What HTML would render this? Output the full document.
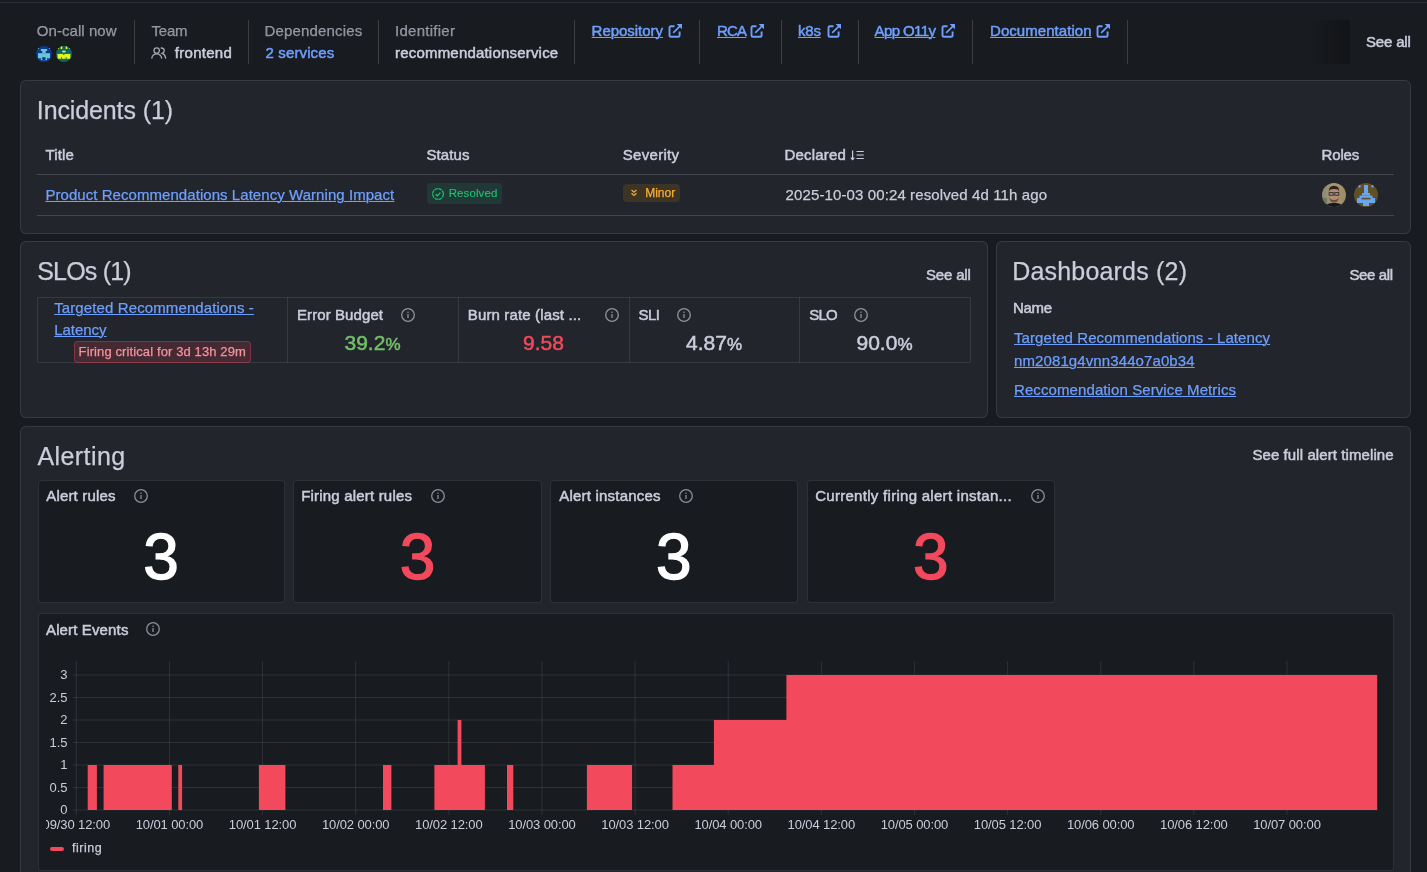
<!DOCTYPE html>
<html><head><meta charset="utf-8"><style>
html,body{margin:0;padding:0;}
body{width:1427px;height:872px;overflow:hidden;position:relative;background:#181b1f;font-family:"Liberation Sans", sans-serif;}
.t{position:absolute;white-space:nowrap;}
.r{position:absolute;}
</style></head><body><div id="root" style="position:absolute;left:0;top:0;width:1427px;height:872px;will-change:transform">
<div class="r" style="left:0;top:2px;width:1427px;height:1px;background:#2a2d33"></div>
<div class="t" id="t0" style="left:36.80px;top:23.30px;font-size:15px;line-height:15px;color:rgba(204,204,220,0.65);letter-spacing:0.060px;-webkit-text-stroke:0.25px currentColor;">On-call now</div>
<svg class="r" style="left:36px;top:46px" width="16" height="16" viewBox="0 0 16 16"><defs><clipPath id="c1"><circle cx="8" cy="8" r="8"/></clipPath></defs><g clip-path="url(#c1)"><rect width="16" height="16" fill="#0b3a8c"/><g fill="#6cc4d8"><rect x="4.8" y="3" width="6.3" height="2"/><rect x="6.3" y="5" width="3.4" height="2.3"/><rect x="2" y="7.2" width="12" height="5.1"/><rect x="4.8" y="12.3" width="6.3" height="1.9"/><rect x="2" y="2" width="1" height="1"/><rect x="13" y="2" width="1" height="1"/></g><rect x="6.3" y="11.2" width="3.1" height="3" fill="#0b3a8c"/></g></svg>
<svg class="r" style="left:56px;top:46px" width="16" height="16" viewBox="0 0 16 16"><defs><clipPath id="c2"><circle cx="8" cy="8" r="8"/></clipPath></defs><g clip-path="url(#c2)"><rect width="16" height="16" fill="#0e6466"/><g fill="#e4f51c"><rect x="4.6" y="0" width="1.7" height="3"/><rect x="9.7" y="0" width="1.7" height="3"/><rect x="1.9" y="1.8" width="1" height="1"/><rect x="13.1" y="1.8" width="1" height="1"/><ellipse cx="7.9" cy="5.5" rx="1.9" ry="0.9"/><rect x="1.5" y="7.9" width="12.9" height="4.9"/></g><g fill="#0e6466"><path d="M6.5 7.9H9L7.75 8.9Z"/><rect x="5" y="11.2" width="1" height="1.6"/><rect x="9.6" y="11.2" width="1" height="1.6"/></g></g></svg>
<div class="r" style="left:134px;top:20px;width:1px;height:44px;background:rgba(204,204,220,0.20)"></div>
<div class="r" style="left:248px;top:20px;width:1px;height:44px;background:rgba(204,204,220,0.20)"></div>
<div class="r" style="left:378px;top:20px;width:1px;height:44px;background:rgba(204,204,220,0.20)"></div>
<div class="r" style="left:574px;top:20px;width:1px;height:44px;background:rgba(204,204,220,0.20)"></div>
<div class="r" style="left:699px;top:20px;width:1px;height:44px;background:rgba(204,204,220,0.20)"></div>
<div class="r" style="left:781px;top:20px;width:1px;height:44px;background:rgba(204,204,220,0.20)"></div>
<div class="r" style="left:858px;top:20px;width:1px;height:44px;background:rgba(204,204,220,0.20)"></div>
<div class="r" style="left:972px;top:20px;width:1px;height:44px;background:rgba(204,204,220,0.20)"></div>
<div class="r" style="left:1127px;top:20px;width:1px;height:44px;background:rgba(204,204,220,0.20)"></div>
<div class="t" id="t1" style="left:151.40px;top:23.30px;font-size:15px;line-height:15px;color:rgba(204,204,220,0.65);letter-spacing:-0.163px;-webkit-text-stroke:0.25px currentColor;">Team</div>
<svg class="r" style="left:150px;top:46px" width="18" height="14" viewBox="0 0 18 14"><g fill="none" stroke="#a5a7b2" stroke-width="1.3" stroke-linecap="round"><circle cx="6.7" cy="4.6" r="2.7"/><path d="M1.8 12.2Q2.6 7.9 6.7 7.9Q10.8 7.9 11.6 12.2"/><path d="M11.2 2.0Q14.3 2.2 14.3 4.6Q14.3 6.6 12.2 7.4Q15.1 8.3 15.7 12.2"/></g></svg>
<div class="t" id="t2" style="left:174.80px;top:45.30px;font-size:15px;line-height:15px;color:#ccccdc;letter-spacing:0.278px;-webkit-text-stroke:0.5px currentColor;">frontend</div>
<div class="t" id="t3" style="left:264.60px;top:23.30px;font-size:15px;line-height:15px;color:rgba(204,204,220,0.65);letter-spacing:0.154px;-webkit-text-stroke:0.25px currentColor;">Dependencies</div>
<div class="t" id="t4" style="left:265.60px;top:45.30px;font-size:15px;line-height:15px;color:#6e9fff;letter-spacing:0.120px;-webkit-text-stroke:0.5px currentColor;">2 services</div>
<div class="t" id="t5" style="left:395.00px;top:23.30px;font-size:15px;line-height:15px;color:rgba(204,204,220,0.65);letter-spacing:0.272px;-webkit-text-stroke:0.25px currentColor;">Identifier</div>
<div class="t" id="t6" style="left:395.00px;top:45.30px;font-size:15px;line-height:15px;color:#ccccdc;letter-spacing:0.197px;-webkit-text-stroke:0.5px currentColor;">recommendationservice</div>
<div class="t" id="t7" style="left:591.60px;top:22.90px;font-size:15px;line-height:15px;color:#6e9fff;letter-spacing:-0.033px;-webkit-text-stroke:0.5px currentColor;text-decoration:underline;text-decoration-thickness:1px;">Repository</div>
<svg class="r" style="left:667.50px;top:22.60px" width="15" height="15" viewBox="0 0 15 15"><path d="M6.5 3.2H2.9Q1.5 3.2 1.5 4.6V12.4Q1.5 13.8 2.9 13.8H10.2Q11.6 13.8 11.6 12.4V8.6" fill="none" stroke="#6e9fff" stroke-width="1.9"/><path d="M5.2 9.9L12 3.1" stroke="#6e9fff" stroke-width="1.6"/><path d="M8.6 0.9H14V6.3Z" fill="#6e9fff"/></svg>
<div class="t" id="t8" style="left:717.00px;top:22.90px;font-size:15px;line-height:15px;color:#6e9fff;letter-spacing:-0.800px;-webkit-text-stroke:0.5px currentColor;text-decoration:underline;text-decoration-thickness:1px;">RCA</div>
<svg class="r" style="left:749.70px;top:22.60px" width="15" height="15" viewBox="0 0 15 15"><path d="M6.5 3.2H2.9Q1.5 3.2 1.5 4.6V12.4Q1.5 13.8 2.9 13.8H10.2Q11.6 13.8 11.6 12.4V8.6" fill="none" stroke="#6e9fff" stroke-width="1.9"/><path d="M5.2 9.9L12 3.1" stroke="#6e9fff" stroke-width="1.6"/><path d="M8.6 0.9H14V6.3Z" fill="#6e9fff"/></svg>
<div class="t" id="t9" style="left:798.00px;top:22.90px;font-size:15px;line-height:15px;color:#6e9fff;letter-spacing:-0.200px;-webkit-text-stroke:0.5px currentColor;text-decoration:underline;text-decoration-thickness:1px;">k8s</div>
<svg class="r" style="left:826.70px;top:22.60px" width="15" height="15" viewBox="0 0 15 15"><path d="M6.5 3.2H2.9Q1.5 3.2 1.5 4.6V12.4Q1.5 13.8 2.9 13.8H10.2Q11.6 13.8 11.6 12.4V8.6" fill="none" stroke="#6e9fff" stroke-width="1.9"/><path d="M5.2 9.9L12 3.1" stroke="#6e9fff" stroke-width="1.6"/><path d="M8.6 0.9H14V6.3Z" fill="#6e9fff"/></svg>
<div class="t" id="t10" style="left:874.60px;top:22.90px;font-size:15px;line-height:15px;color:#6e9fff;letter-spacing:-0.600px;-webkit-text-stroke:0.5px currentColor;text-decoration:underline;text-decoration-thickness:1px;">App O11y</div>
<svg class="r" style="left:940.70px;top:22.60px" width="15" height="15" viewBox="0 0 15 15"><path d="M6.5 3.2H2.9Q1.5 3.2 1.5 4.6V12.4Q1.5 13.8 2.9 13.8H10.2Q11.6 13.8 11.6 12.4V8.6" fill="none" stroke="#6e9fff" stroke-width="1.9"/><path d="M5.2 9.9L12 3.1" stroke="#6e9fff" stroke-width="1.6"/><path d="M8.6 0.9H14V6.3Z" fill="#6e9fff"/></svg>
<div class="t" id="t11" style="left:990.00px;top:22.90px;font-size:15px;line-height:15px;color:#6e9fff;letter-spacing:0.057px;-webkit-text-stroke:0.5px currentColor;text-decoration:underline;text-decoration-thickness:1px;">Documentation</div>
<svg class="r" style="left:1095.50px;top:22.60px" width="15" height="15" viewBox="0 0 15 15"><path d="M6.5 3.2H2.9Q1.5 3.2 1.5 4.6V12.4Q1.5 13.8 2.9 13.8H10.2Q11.6 13.8 11.6 12.4V8.6" fill="none" stroke="#6e9fff" stroke-width="1.9"/><path d="M5.2 9.9L12 3.1" stroke="#6e9fff" stroke-width="1.6"/><path d="M8.6 0.9H14V6.3Z" fill="#6e9fff"/></svg>
<div class="r" style="left:1311px;top:20px;width:39px;height:44px;background:linear-gradient(90deg,rgba(17,18,23,0),#131418)"></div>
<div class="t" id="t12" style="left:1366.00px;top:34.20px;font-size:15px;line-height:15px;color:#ccccdc;letter-spacing:-0.179px;-webkit-text-stroke:0.5px currentColor;">See all</div>
<div class="r" style="left:20px;top:80px;width:1391px;height:154px;background:#22252b;border:1px solid rgba(204,204,220,0.12);border-radius:6px;box-sizing:border-box"></div>
<div class="t" id="t13" style="left:36.80px;top:97.93px;font-size:25px;line-height:25px;color:#ccccdc;letter-spacing:-0.113px;-webkit-text-stroke:0.25px currentColor;">Incidents (1)</div>
<div class="t" id="t14" style="left:45.40px;top:147.30px;font-size:15px;line-height:15px;color:#ccccdc;letter-spacing:0.155px;-webkit-text-stroke:0.5px currentColor;">Title</div>
<div class="t" id="t15" style="left:426.40px;top:147.30px;font-size:15px;line-height:15px;color:#ccccdc;letter-spacing:0.094px;-webkit-text-stroke:0.5px currentColor;">Status</div>
<div class="t" id="t16" style="left:622.80px;top:147.30px;font-size:15px;line-height:15px;color:#ccccdc;letter-spacing:0.288px;-webkit-text-stroke:0.5px currentColor;">Severity</div>
<div class="t" id="t17" style="left:784.60px;top:147.30px;font-size:15px;line-height:15px;color:#ccccdc;letter-spacing:0.167px;-webkit-text-stroke:0.5px currentColor;">Declared</div>
<div class="t" id="t18" style="left:1321.60px;top:147.30px;font-size:15px;line-height:15px;color:#ccccdc;letter-spacing:-0.190px;-webkit-text-stroke:0.5px currentColor;">Roles</div>
<svg class="r" style="left:850px;top:149px" width="15" height="13" viewBox="0 0 15 13"><g fill="none" stroke="#ccccdc" stroke-width="1.2"><path d="M2.6 1.5V10.5"/><path d="M0.8 8.6L2.6 10.6L4.4 8.6"/><path d="M6.5 2.5H13.8M6.5 6H13.8M6.5 9.5H13.8"/></g></svg>
<div class="r" style="left:37px;top:174px;width:1357px;height:1px;background:rgba(204,204,220,0.20)"></div>
<div class="r" style="left:37px;top:215px;width:1357px;height:1px;background:rgba(204,204,220,0.20)"></div>
<div class="t" id="t19" style="left:45.40px;top:186.90px;font-size:15px;line-height:15px;color:#6e9fff;letter-spacing:0.057px;-webkit-text-stroke:0.25px currentColor;text-decoration:underline;text-decoration-thickness:1px;">Product Recommendations Latency Warning Impact</div>
<div class="r" style="left:427px;top:183px;width:75px;height:21px;background:rgba(27,133,94,0.22);border-radius:3px"></div>
<svg class="r" style="left:431px;top:187px" width="14" height="14" viewBox="0 0 14 14"><circle cx="7" cy="7" r="5.4" fill="none" stroke="#1ec472" stroke-width="1.2" stroke-dasharray="3.6 0.6"/><path d="M4.6 7.2L6.3 8.8L9.4 5.6" fill="none" stroke="#1ec472" stroke-width="1.2"/></svg>
<div class="t" id="t20" style="left:448.70px;top:188.06px;font-size:11.5px;line-height:11.5px;color:#1ec472;letter-spacing:0.100px;-webkit-text-stroke:0.1px currentColor;">Resolved</div>
<div class="r" style="left:623px;top:184px;width:57px;height:18px;background:rgba(255,166,0,0.12);border-radius:4px"></div>
<svg class="r" style="left:630px;top:189px" width="8" height="8" viewBox="0 0 8 8"><g fill="none" stroke="#fbad37" stroke-width="1.3"><path d="M1.5 1L4 3.2L6.5 1"/><path d="M1.5 4.2L4 6.4L6.5 4.2"/></g></svg>
<div class="t" id="t21" style="left:645.20px;top:187.04px;font-size:12px;line-height:12px;color:#fbad37;-webkit-text-stroke:0.25px currentColor;">Minor</div>
<div class="t" id="t22" style="left:785.60px;top:186.90px;font-size:15px;line-height:15px;color:#ccccdc;letter-spacing:0.113px;-webkit-text-stroke:0.25px currentColor;">2025-10-03 00:24 resolved 4d 11h ago</div>
<svg class="r" style="left:1322px;top:183px" width="24" height="24" viewBox="0 0 24 24"><defs><clipPath id="c3"><circle cx="12" cy="12" r="12"/></clipPath><linearGradient id="g3" x1="0" y1="0" x2="1" y2="0"><stop offset="0" stop-color="#8a8a70"/><stop offset="0.5" stop-color="#a89a78"/><stop offset="1" stop-color="#9c8a60"/></linearGradient></defs><g clip-path="url(#c3)"><rect width="24" height="24" fill="url(#g3)"/><ellipse cx="12" cy="12.5" rx="5.2" ry="7" fill="#b48a74"/><path d="M6.8 9Q6.5 2.8 12 2.8Q17.5 2.8 17.2 9L16.2 6.8Q12 5 7.8 6.8Z" fill="#2e241e"/><g fill="none" stroke="#2a2a2a" stroke-width="0.9"><rect x="7.2" y="9.6" width="4" height="2.6"/><rect x="12.8" y="9.6" width="4" height="2.6"/></g><path d="M7 14Q7.5 19.5 12 19.8Q16.5 19.5 17 14Q16 17 12 17Q8 17 7 14Z" fill="#5a4236" opacity="0.8"/><path d="M3 24Q5 19.5 12 20Q19 19.5 21 24Z" fill="#141820"/><rect x="0" y="15" width="5" height="6" fill="#55674a" opacity="0.55"/></g></svg>
<svg class="r" style="left:1354px;top:183px" width="24" height="24" viewBox="0 0 24 24"><defs><clipPath id="c4"><circle cx="12" cy="12" r="12"/></clipPath></defs><g clip-path="url(#c4)"><rect width="24" height="24" fill="#5f5028"/><g fill="#6aa5f0"><rect x="10" y="2" width="4" height="8"/><rect x="4.5" y="2" width="2" height="2.5"/><rect x="17.5" y="2" width="2" height="2.5"/><rect x="8" y="10" width="8" height="2.5"/><rect x="5.5" y="12.5" width="13" height="2.5"/><rect x="3" y="15" width="18" height="5"/><rect x="9" y="20" width="6" height="3"/></g><rect x="7.5" y="14.8" width="9" height="1.6" fill="#5f5028"/></g></svg>
<div class="r" style="left:20px;top:241px;width:968px;height:177px;background:#22252b;border:1px solid rgba(204,204,220,0.12);border-radius:6px;box-sizing:border-box"></div>
<div class="t" id="t23" style="left:37.20px;top:258.83px;font-size:25px;line-height:25px;color:#ccccdc;letter-spacing:-0.800px;-webkit-text-stroke:0.25px currentColor;">SLOs (1)</div>
<div class="t" id="t24" style="left:926.00px;top:267.20px;font-size:15px;line-height:15px;color:#ccccdc;letter-spacing:-0.179px;-webkit-text-stroke:0.5px currentColor;">See all</div>
<div class="r" style="left:37px;top:297px;width:934px;height:66px;border:1px solid rgba(204,204,220,0.12);box-sizing:border-box"></div>
<div class="r" style="left:287px;top:297px;width:1px;height:66px;background:rgba(204,204,220,0.12)"></div>
<div class="r" style="left:458px;top:297px;width:1px;height:66px;background:rgba(204,204,220,0.12)"></div>
<div class="r" style="left:629px;top:297px;width:1px;height:66px;background:rgba(204,204,220,0.12)"></div>
<div class="r" style="left:799px;top:297px;width:1px;height:66px;background:rgba(204,204,220,0.12)"></div>
<div class="t" id="t25" style="left:54.20px;top:300.00px;font-size:15px;line-height:15px;color:#6e9fff;letter-spacing:0.113px;-webkit-text-stroke:0.25px currentColor;text-decoration:underline;text-decoration-thickness:1px;">Targeted Recommendations -</div>
<div class="t" id="lat" style="left:54.20px;top:322.10px;font-size:15px;line-height:15px;color:#6e9fff;letter-spacing:-0.025px;-webkit-text-stroke:0.25px currentColor;text-decoration:underline;text-decoration-thickness:1px;">Latency</div>
<div class="r" style="left:74px;top:341px;width:177px;height:22px;background:rgba(242,73,92,0.17);border:1px solid rgba(242,73,92,0.35);border-radius:4px;box-sizing:border-box"></div>
<div class="t" id="t27" style="left:78.60px;top:345.19px;font-size:13px;line-height:13px;color:#f5939c;letter-spacing:0.111px;-webkit-text-stroke:0.25px currentColor;">Firing critical for 3d 13h 29m</div>
<div class="t" id="t28" style="left:297.00px;top:307.20px;font-size:15px;line-height:15px;color:#ccccdc;letter-spacing:0.087px;-webkit-text-stroke:0.5px currentColor;">Error Budget</div>
<svg class="r" style="left:399.85px;top:307.00px" width="16" height="16" viewBox="0 0 16 16"><circle cx="8" cy="8" r="6.3" fill="none" stroke="rgba(204,204,220,0.65)" stroke-width="1.3"/><rect x="7.35" y="7" width="1.3" height="4" fill="rgba(204,204,220,0.65)"/><rect x="7.35" y="4.6" width="1.3" height="1.3" fill="rgba(204,204,220,0.65)"/></svg>
<div class="t" id="t29" style="left:467.80px;top:307.20px;font-size:15px;line-height:15px;color:#ccccdc;letter-spacing:0.139px;-webkit-text-stroke:0.5px currentColor;">Burn rate (last ...</div>
<svg class="r" style="left:603.95px;top:307.00px" width="16" height="16" viewBox="0 0 16 16"><circle cx="8" cy="8" r="6.3" fill="none" stroke="rgba(204,204,220,0.65)" stroke-width="1.3"/><rect x="7.35" y="7" width="1.3" height="4" fill="rgba(204,204,220,0.65)"/><rect x="7.35" y="4.6" width="1.3" height="1.3" fill="rgba(204,204,220,0.65)"/></svg>
<div class="t" id="t30" style="left:638.40px;top:307.20px;font-size:15px;line-height:15px;color:#ccccdc;letter-spacing:-0.458px;-webkit-text-stroke:0.5px currentColor;">SLI</div>
<svg class="r" style="left:676.05px;top:307.00px" width="16" height="16" viewBox="0 0 16 16"><circle cx="8" cy="8" r="6.3" fill="none" stroke="rgba(204,204,220,0.65)" stroke-width="1.3"/><rect x="7.35" y="7" width="1.3" height="4" fill="rgba(204,204,220,0.65)"/><rect x="7.35" y="4.6" width="1.3" height="1.3" fill="rgba(204,204,220,0.65)"/></svg>
<div class="t" id="t31" style="left:809.20px;top:307.20px;font-size:15px;line-height:15px;color:#ccccdc;letter-spacing:-0.800px;-webkit-text-stroke:0.5px currentColor;">SLO</div>
<svg class="r" style="left:853.15px;top:307.00px" width="16" height="16" viewBox="0 0 16 16"><circle cx="8" cy="8" r="6.3" fill="none" stroke="rgba(204,204,220,0.65)" stroke-width="1.3"/><rect x="7.35" y="7" width="1.3" height="4" fill="rgba(204,204,220,0.65)"/><rect x="7.35" y="4.6" width="1.3" height="1.3" fill="rgba(204,204,220,0.65)"/></svg>
<div class="t" style="left:272.50px;width:200px;text-align:center;top:332.22px;font-size:21px;line-height:21px;color:#73bf69;-webkit-text-stroke:0.5px currentColor">39.2<span style="font-size:17px">%</span></div>
<div class="t" style="left:443.50px;width:200px;text-align:center;top:332.22px;font-size:21px;line-height:21px;color:#f2495c;-webkit-text-stroke:0.5px currentColor">9.58</div>
<div class="t" style="left:614.00px;width:200px;text-align:center;top:332.22px;font-size:21px;line-height:21px;color:#ccccdc;-webkit-text-stroke:0.5px currentColor">4.87<span style="font-size:17px">%</span></div>
<div class="t" style="left:784.50px;width:200px;text-align:center;top:332.22px;font-size:21px;line-height:21px;color:#ccccdc;-webkit-text-stroke:0.5px currentColor">90.0<span style="font-size:17px">%</span></div>
<div class="r" style="left:996px;top:241px;width:415px;height:177px;background:#22252b;border:1px solid rgba(204,204,220,0.12);border-radius:6px;box-sizing:border-box"></div>
<div class="t" id="t32" style="left:1012.20px;top:258.83px;font-size:25px;line-height:25px;color:#ccccdc;letter-spacing:0.191px;-webkit-text-stroke:0.25px currentColor;">Dashboards (2)</div>
<div class="t" id="t33" style="left:1349.40px;top:267.30px;font-size:15px;line-height:15px;color:#ccccdc;letter-spacing:-0.345px;-webkit-text-stroke:0.5px currentColor;">See all</div>
<div class="t" id="t34" style="left:1013.00px;top:300.30px;font-size:15px;line-height:15px;color:#ccccdc;letter-spacing:-0.339px;-webkit-text-stroke:0.5px currentColor;">Name</div>
<div class="t" id="t35" style="left:1014.00px;top:330.20px;font-size:15px;line-height:15px;color:#6e9fff;letter-spacing:0.077px;-webkit-text-stroke:0.25px currentColor;text-decoration:underline;text-decoration-thickness:1px;">Targeted Recommendations - Latency</div>
<div class="t" id="t36" style="left:1014.00px;top:352.50px;font-size:15px;line-height:15px;color:#6e9fff;letter-spacing:0.105px;-webkit-text-stroke:0.25px currentColor;text-decoration:underline;text-decoration-thickness:1px;">nm2081g4vnn344o7a0b34</div>
<div class="t" id="t37" style="left:1014.00px;top:382.30px;font-size:15px;line-height:15px;color:#6e9fff;letter-spacing:0.094px;-webkit-text-stroke:0.25px currentColor;text-decoration:underline;text-decoration-thickness:1px;">Reccomendation Service Metrics</div>
<div class="r" style="left:20px;top:426px;width:1391px;height:520px;background:#22252b;border:1px solid rgba(204,204,220,0.12);border-radius:6px;box-sizing:border-box"></div>
<div class="t" id="t38" style="left:37.40px;top:443.53px;font-size:25px;line-height:25px;color:#ccccdc;letter-spacing:0.431px;-webkit-text-stroke:0.25px currentColor;">Alerting</div>
<div class="t" id="t39" style="left:1252.40px;top:446.50px;font-size:15px;line-height:15px;color:#ccccdc;letter-spacing:0.091px;-webkit-text-stroke:0.5px currentColor;">See full alert timeline</div>
<div class="r" style="left:37.5px;top:479.5px;width:247px;height:123.5px;background:#181b1f;border:1px solid rgba(204,204,220,0.12);border-radius:4px;box-sizing:border-box"></div>
<div class="t" id="t40" style="left:46.20px;top:488.30px;font-size:15px;line-height:15px;color:#ccccdc;letter-spacing:0.187px;-webkit-text-stroke:0.5px currentColor;">Alert rules</div>
<svg class="r" style="left:133.05px;top:488.00px" width="16" height="16" viewBox="0 0 16 16"><circle cx="8" cy="8" r="6.3" fill="none" stroke="rgba(204,204,220,0.65)" stroke-width="1.3"/><rect x="7.35" y="7" width="1.3" height="4" fill="rgba(204,204,220,0.65)"/><rect x="7.35" y="4.6" width="1.3" height="1.3" fill="rgba(204,204,220,0.65)"/></svg>
<div class="t" style="left:37.50px;width:247px;text-align:center;top:525.01px;font-size:64px;line-height:64px;color:#ffffff;-webkit-text-stroke:1.3px currentColor">3</div>
<div class="r" style="left:293px;top:479.5px;width:249px;height:123.5px;background:#181b1f;border:1px solid rgba(204,204,220,0.12);border-radius:4px;box-sizing:border-box"></div>
<div class="t" id="t41" style="left:301.20px;top:488.30px;font-size:15px;line-height:15px;color:#ccccdc;letter-spacing:0.190px;-webkit-text-stroke:0.5px currentColor;">Firing alert rules</div>
<svg class="r" style="left:430.10px;top:488.00px" width="16" height="16" viewBox="0 0 16 16"><circle cx="8" cy="8" r="6.3" fill="none" stroke="rgba(204,204,220,0.65)" stroke-width="1.3"/><rect x="7.35" y="7" width="1.3" height="4" fill="rgba(204,204,220,0.65)"/><rect x="7.35" y="4.6" width="1.3" height="1.3" fill="rgba(204,204,220,0.65)"/></svg>
<div class="t" style="left:293.00px;width:249px;text-align:center;top:525.01px;font-size:64px;line-height:64px;color:#f2495c;-webkit-text-stroke:1.3px currentColor">3</div>
<div class="r" style="left:550px;top:479.5px;width:247.5px;height:123.5px;background:#181b1f;border:1px solid rgba(204,204,220,0.12);border-radius:4px;box-sizing:border-box"></div>
<div class="t" id="t42" style="left:559.20px;top:488.30px;font-size:15px;line-height:15px;color:#ccccdc;letter-spacing:0.214px;-webkit-text-stroke:0.5px currentColor;">Alert instances</div>
<svg class="r" style="left:678.15px;top:488.00px" width="16" height="16" viewBox="0 0 16 16"><circle cx="8" cy="8" r="6.3" fill="none" stroke="rgba(204,204,220,0.65)" stroke-width="1.3"/><rect x="7.35" y="7" width="1.3" height="4" fill="rgba(204,204,220,0.65)"/><rect x="7.35" y="4.6" width="1.3" height="1.3" fill="rgba(204,204,220,0.65)"/></svg>
<div class="t" style="left:550.00px;width:247.5px;text-align:center;top:525.01px;font-size:64px;line-height:64px;color:#ffffff;-webkit-text-stroke:1.3px currentColor">3</div>
<div class="r" style="left:806.5px;top:479.5px;width:248.5px;height:123.5px;background:#181b1f;border:1px solid rgba(204,204,220,0.12);border-radius:4px;box-sizing:border-box"></div>
<div class="t" id="t43" style="left:815.20px;top:488.30px;font-size:15px;line-height:15px;color:#ccccdc;letter-spacing:0.286px;-webkit-text-stroke:0.5px currentColor;">Currently firing alert instan...</div>
<svg class="r" style="left:1030.05px;top:488.00px" width="16" height="16" viewBox="0 0 16 16"><circle cx="8" cy="8" r="6.3" fill="none" stroke="rgba(204,204,220,0.65)" stroke-width="1.3"/><rect x="7.35" y="7" width="1.3" height="4" fill="rgba(204,204,220,0.65)"/><rect x="7.35" y="4.6" width="1.3" height="1.3" fill="rgba(204,204,220,0.65)"/></svg>
<div class="t" style="left:806.50px;width:248.5px;text-align:center;top:525.01px;font-size:64px;line-height:64px;color:#f2495c;-webkit-text-stroke:1.3px currentColor">3</div>
<div class="r" style="left:37.5px;top:612.5px;width:1356px;height:258.5px;background:#181b1f;border:1px solid rgba(204,204,220,0.12);border-radius:4px;box-sizing:border-box"></div>
<div class="t" id="t44" style="left:46.00px;top:621.50px;font-size:15px;line-height:15px;color:#ccccdc;letter-spacing:0.138px;-webkit-text-stroke:0.5px currentColor;">Alert Events</div>
<svg class="r" style="left:145.20px;top:621.10px" width="16" height="16" viewBox="0 0 16 16"><circle cx="8" cy="8" r="6.3" fill="none" stroke="rgba(204,204,220,0.65)" stroke-width="1.3"/><rect x="7.35" y="7" width="1.3" height="4" fill="rgba(204,204,220,0.65)"/><rect x="7.35" y="4.6" width="1.3" height="1.3" fill="rgba(204,204,220,0.65)"/></svg>
<svg class="r" style="left:0;top:0" width="1427" height="872" viewBox="0 0 1427 872"><rect x="73" y="674.5" width="1304" height="1" fill="rgba(204,204,220,0.12)"/><rect x="73" y="697.0" width="1304" height="1" fill="rgba(204,204,220,0.12)"/><rect x="73" y="719.5" width="1304" height="1" fill="rgba(204,204,220,0.12)"/><rect x="73" y="742.0" width="1304" height="1" fill="rgba(204,204,220,0.12)"/><rect x="73" y="764.5" width="1304" height="1" fill="rgba(204,204,220,0.12)"/><rect x="73" y="787.0" width="1304" height="1" fill="rgba(204,204,220,0.12)"/><rect x="73" y="809.5" width="1304" height="1" fill="rgba(204,204,220,0.12)"/><rect x="75.80" y="661" width="1" height="154" fill="rgba(204,204,220,0.12)"/><rect x="168.93" y="661" width="1" height="154" fill="rgba(204,204,220,0.12)"/><rect x="262.06" y="661" width="1" height="154" fill="rgba(204,204,220,0.12)"/><rect x="355.19" y="661" width="1" height="154" fill="rgba(204,204,220,0.12)"/><rect x="448.32" y="661" width="1" height="154" fill="rgba(204,204,220,0.12)"/><rect x="541.45" y="661" width="1" height="154" fill="rgba(204,204,220,0.12)"/><rect x="634.58" y="661" width="1" height="154" fill="rgba(204,204,220,0.12)"/><rect x="727.71" y="661" width="1" height="154" fill="rgba(204,204,220,0.12)"/><rect x="820.84" y="661" width="1" height="154" fill="rgba(204,204,220,0.12)"/><rect x="913.97" y="661" width="1" height="154" fill="rgba(204,204,220,0.12)"/><rect x="1007.10" y="661" width="1" height="154" fill="rgba(204,204,220,0.12)"/><rect x="1100.23" y="661" width="1" height="154" fill="rgba(204,204,220,0.12)"/><rect x="1193.36" y="661" width="1" height="154" fill="rgba(204,204,220,0.12)"/><rect x="1286.49" y="661" width="1" height="154" fill="rgba(204,204,220,0.12)"/><path d="M87.7 810L87.7 765L96.9 765L96.9 810Z" fill="#f2495c"/><path d="M103.6 810L103.6 765L171.8 765L171.8 810Z" fill="#f2495c"/><path d="M178.3 810L178.3 765L182.1 765L182.1 810Z" fill="#f2495c"/><path d="M258.9 810L258.9 765L285.4 765L285.4 810Z" fill="#f2495c"/><path d="M383 810L383 765L391.4 765L391.4 810Z" fill="#f2495c"/><path d="M434.4 810L434.4 765L457.6 765L457.6 720L461.4 720L461.4 765L484.9 765L484.9 810Z" fill="#f2495c"/><path d="M507 810L507 765L513.3 765L513.3 810Z" fill="#f2495c"/><path d="M586.9 810L586.9 765L632.1 765L632.1 810Z" fill="#f2495c"/><path d="M672.5 810L672.5 765L713.9 765L713.9 720L786.4 720L786.4 675L1377.2 675L1377.2 810Z" fill="#f2495c"/></svg>
<div class="t" style="left:20px;width:47.5px;text-align:right;top:668.49px;font-size:13px;line-height:13px;color:#ccccdc">3</div>
<div class="t" style="left:20px;width:47.5px;text-align:right;top:690.99px;font-size:13px;line-height:13px;color:#ccccdc">2.5</div>
<div class="t" style="left:20px;width:47.5px;text-align:right;top:713.49px;font-size:13px;line-height:13px;color:#ccccdc">2</div>
<div class="t" style="left:20px;width:47.5px;text-align:right;top:735.99px;font-size:13px;line-height:13px;color:#ccccdc">1.5</div>
<div class="t" style="left:20px;width:47.5px;text-align:right;top:758.49px;font-size:13px;line-height:13px;color:#ccccdc">1</div>
<div class="t" style="left:20px;width:47.5px;text-align:right;top:780.99px;font-size:13px;line-height:13px;color:#ccccdc">0.5</div>
<div class="t" style="left:20px;width:47.5px;text-align:right;top:803.49px;font-size:13px;line-height:13px;color:#ccccdc">0</div>
<div class="r" style="left:46px;top:812px;width:1340px;height:24px;overflow:hidden">
<div class="t" style="left:-29.70px;width:120px;text-align:center;top:5.79px;font-size:13px;line-height:13px;color:#ccccdc;letter-spacing:-0.1px">09/30 12:00</div>
<div class="t" style="left:63.43px;width:120px;text-align:center;top:5.79px;font-size:13px;line-height:13px;color:#ccccdc;letter-spacing:-0.1px">10/01 00:00</div>
<div class="t" style="left:156.56px;width:120px;text-align:center;top:5.79px;font-size:13px;line-height:13px;color:#ccccdc;letter-spacing:-0.1px">10/01 12:00</div>
<div class="t" style="left:249.69px;width:120px;text-align:center;top:5.79px;font-size:13px;line-height:13px;color:#ccccdc;letter-spacing:-0.1px">10/02 00:00</div>
<div class="t" style="left:342.82px;width:120px;text-align:center;top:5.79px;font-size:13px;line-height:13px;color:#ccccdc;letter-spacing:-0.1px">10/02 12:00</div>
<div class="t" style="left:435.95px;width:120px;text-align:center;top:5.79px;font-size:13px;line-height:13px;color:#ccccdc;letter-spacing:-0.1px">10/03 00:00</div>
<div class="t" style="left:529.08px;width:120px;text-align:center;top:5.79px;font-size:13px;line-height:13px;color:#ccccdc;letter-spacing:-0.1px">10/03 12:00</div>
<div class="t" style="left:622.21px;width:120px;text-align:center;top:5.79px;font-size:13px;line-height:13px;color:#ccccdc;letter-spacing:-0.1px">10/04 00:00</div>
<div class="t" style="left:715.34px;width:120px;text-align:center;top:5.79px;font-size:13px;line-height:13px;color:#ccccdc;letter-spacing:-0.1px">10/04 12:00</div>
<div class="t" style="left:808.47px;width:120px;text-align:center;top:5.79px;font-size:13px;line-height:13px;color:#ccccdc;letter-spacing:-0.1px">10/05 00:00</div>
<div class="t" style="left:901.60px;width:120px;text-align:center;top:5.79px;font-size:13px;line-height:13px;color:#ccccdc;letter-spacing:-0.1px">10/05 12:00</div>
<div class="t" style="left:994.73px;width:120px;text-align:center;top:5.79px;font-size:13px;line-height:13px;color:#ccccdc;letter-spacing:-0.1px">10/06 00:00</div>
<div class="t" style="left:1087.86px;width:120px;text-align:center;top:5.79px;font-size:13px;line-height:13px;color:#ccccdc;letter-spacing:-0.1px">10/06 12:00</div>
<div class="t" style="left:1180.99px;width:120px;text-align:center;top:5.79px;font-size:13px;line-height:13px;color:#ccccdc;letter-spacing:-0.1px">10/07 00:00</div>
</div>
<div class="r" style="left:50px;top:847px;width:14px;height:4px;background:#f2495c;border-radius:2px"></div>
<div class="t" id="t45" style="left:72.00px;top:841.72px;font-size:12.5px;line-height:12.5px;color:#ccccdc;letter-spacing:0.523px;-webkit-text-stroke:0.25px currentColor;">firing</div>
</div></body></html>
